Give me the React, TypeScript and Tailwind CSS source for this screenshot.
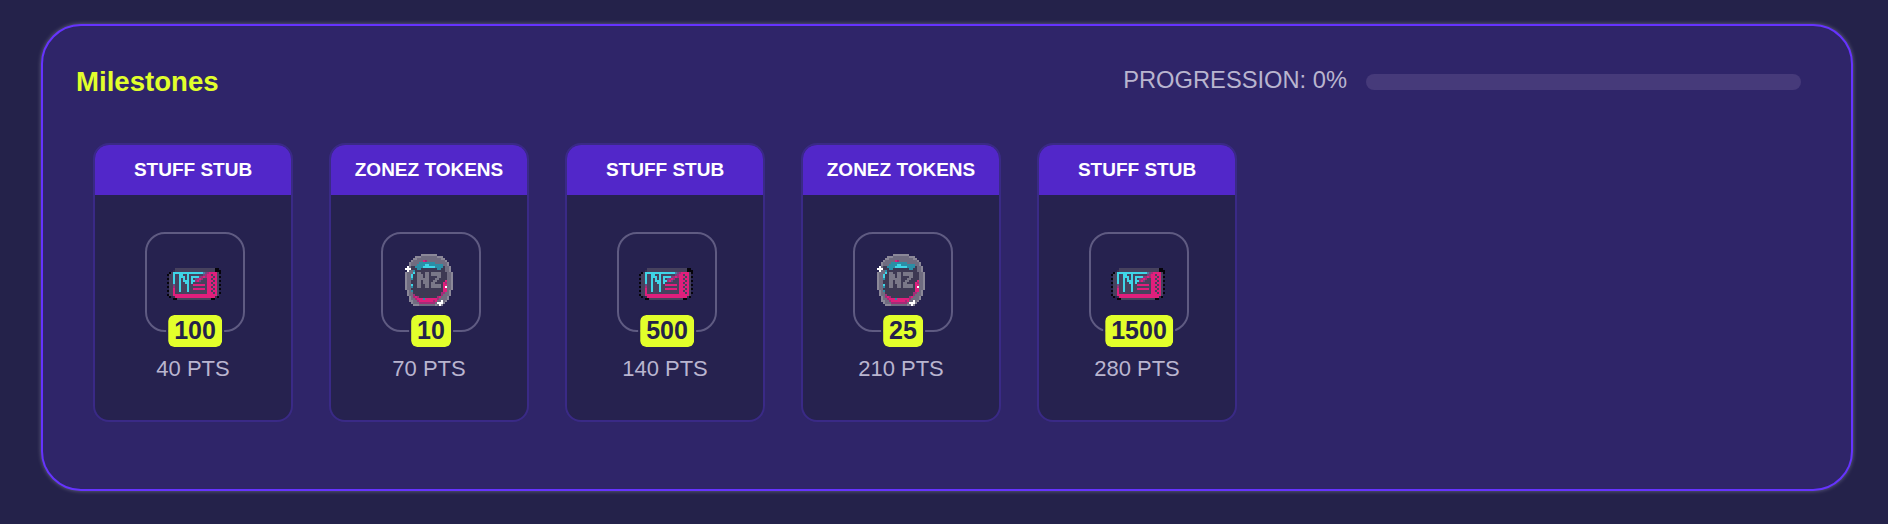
const colors: Record<string, string> = {
  k: '#05040a',
  d: '#47425e',
  e: '#35304c',
  g: '#6f6c80',
  h: '#8b8898',
  n: '#7a7888',
  c: '#3fd6e8',
  t: '#2b8ea6',
  b: '#4d7aa0',
  p: '#e01f7c',
  m: '#a32c78',
  v: '#6a4a80',
  D: '#3d3953',
  w: '#ffffff',
};

const ticket = [
  '....ddddddddddddddddddddkk..',
  '...eddddddddddddddddddddkkk.',
  '.kdcccccccccccccccbvmppppdk.',
  'kddcddccddcdddddddvmppdppd..',
  '.ddcddcccdcdccccvmpmpppdpdk.',
  'kddcddcdcdcdcdvmpmddppdppd..',
  '.ddcddcdcccdccmpvdddpppdpdk.',
  'kddcddcddccdcdddddddppdppd..',
  '.ddvddcdddcddppppppdpppdpdk.',
  'kddmddcdddcdddddddddppdppd..',
  '.ddpddcdddcddppppppdpppdpdk.',
  'kddpddcdddcdddddddddppdppd..',
  '.ddpddddddddddddddddpppdpdk.',
  'kddppppppppppppppppppppppd..',
  '.k.eppppppppppppppppppppek..',
  '...kkdddddddddddddddddkk....',
];

const coin = [
  '........hhhhhhhh........',
  '.....hhhgggggggghhh.....',
  '....hhgggggggggggghh....',
  '...hgggggpmgggggggggh...',
  '..hggggttttttttggggggh..',
  '..hgggttttcctttttttggh..',
  '.wgDDttttccccccttttDggh.',
  'wwwDDDttDDDDDDDDttDDggh.',
  '.wggtDDDDDDDDDDDDDDDggh.',
  'hgggcDnnDDnnDnnnnnDDDggh',
  'hggcDDnnnDnnDnnnnnDDDggh',
  'hggcDDnnnDnnDDDDnnDDDggh',
  'hggtDDnnnnnnDDDnnDDDDggh',
  'hggDDDnnDnnnDDnnDDDDpggh',
  'hggDDDnnDnnnDnnDDDDpmggh',
  'hggcDDnnDDnnDnnnnnDppggh',
  'hggtDDnnDDnnDnnnnnDpwggh',
  'hggDDDDDDDDDDDDDDDDppggh',
  '.hgtDDDDDDDDDDDDDDDppgh.',
  '.hggDDDDDDDDDDDDDDmmggh.',
  '.hggmDDDDDDDDDDDDDmgggh.',
  '..hgmpmDDDDDDDDDmpgggh..',
  '..hggmppptppppppmggggh..',
  '..hhggmpppppppmpggwgh...',
  '...hgggmmmmmmmmgwwwh....',
  '....hhhgggggggghgwh.....',
];

function PixelArt({ rows, width, height }: { rows: string[]; width: number; height: number }) {
  const cols = Math.max(...rows.map((r) => r.length));
  return (
    <svg width={width} height={height} viewBox={`0 0 ${cols} ${rows.length}`} shapeRendering="crispEdges">
      {rows.map((row, y) =>
        row.split('').map((ch, x) =>
          colors[ch] ? <rect key={`${x}-${y}`} x={x} y={y} width={1} height={1} fill={colors[ch]} /> : null
        )
      )}
    </svg>
  );
}

const milestones = [
  { title: 'STUFF STUB', amount: '100', points: '40 PTS', coin: false },
  { title: 'ZONEZ TOKENS', amount: '10', points: '70 PTS', coin: true },
  { title: 'STUFF STUB', amount: '500', points: '140 PTS', coin: false },
  { title: 'ZONEZ TOKENS', amount: '25', points: '210 PTS', coin: true },
  { title: 'STUFF STUB', amount: '1500', points: '280 PTS', coin: false },
];

function MilestoneCard({ title, amount, points, coin: isCoin }: (typeof milestones)[number]) {
  return (
    <div className="w-[200px] h-[279px] flex flex-col rounded-[16px] border-2 border-[#3a2a86] bg-[#26224f] overflow-hidden">
      <div className="h-[50px] shrink-0 flex items-center justify-center bg-[#5227c9] text-[19px] font-bold text-white">
        {title}
      </div>
      <div className="flex flex-col items-center pt-[37px]">
        <div className="relative ml-[4px] w-[100px] h-[100px] rounded-[20px] border-2 border-[#5f5b82] flex items-center justify-center">
          {isCoin ? (
            <div className="mb-[4px] mr-[4px]">
              <PixelArt rows={coin} width={52} height={52} />
            </div>
          ) : (
            <div className="mt-[4px]">
              <PixelArt rows={ticket} width={56} height={32} />
            </div>
          )}
          <span className="absolute bottom-[-17px] left-1/2 -translate-x-1/2 h-[32px] px-[6px] flex items-center rounded-[6px] bg-[#e2ff2b] outline-2 outline-[#26224f] text-[25px] font-bold text-[#24224a]">
            {amount}
          </span>
        </div>
        <p className="mt-[24px] text-[22px] leading-[26px] text-[#b9b5cf]">{points}</p>
      </div>
    </div>
  );
}

export default function App() {
  return (
    <div className="min-h-[524px] bg-[#24224a] pt-[24px] pl-[41px] pr-[35px] font-['Liberation_Sans',Arial,sans-serif]">
      <section className="h-[467px] rounded-[40px] border-2 border-[#6633ff] bg-[#2f2569] pl-[33px] pr-[50px] pt-[28px] shadow-[0_0_4px_rgba(190,190,210,0.45)]">
        <div className="h-[52px] flex items-center justify-between">
          <h2 className="mt-[4px] text-[27.6px] font-bold text-[#e2ff2b]">Milestones</h2>
          <div className="flex items-center gap-[19px]">
            <span className="mt-[2px] text-[23.7px] text-[#b9b5cf]">PROGRESSION: 0%</span>
            <div className="mt-[4px] w-[435px] h-[16px] rounded-full bg-[#463a7a]" />
          </div>
        </div>
        <div className="mt-[37px] pl-[17px] flex gap-[36px]">
          {milestones.map((m, i) => (
            <MilestoneCard key={i} {...m} />
          ))}
        </div>
      </section>
    </div>
  );
}
